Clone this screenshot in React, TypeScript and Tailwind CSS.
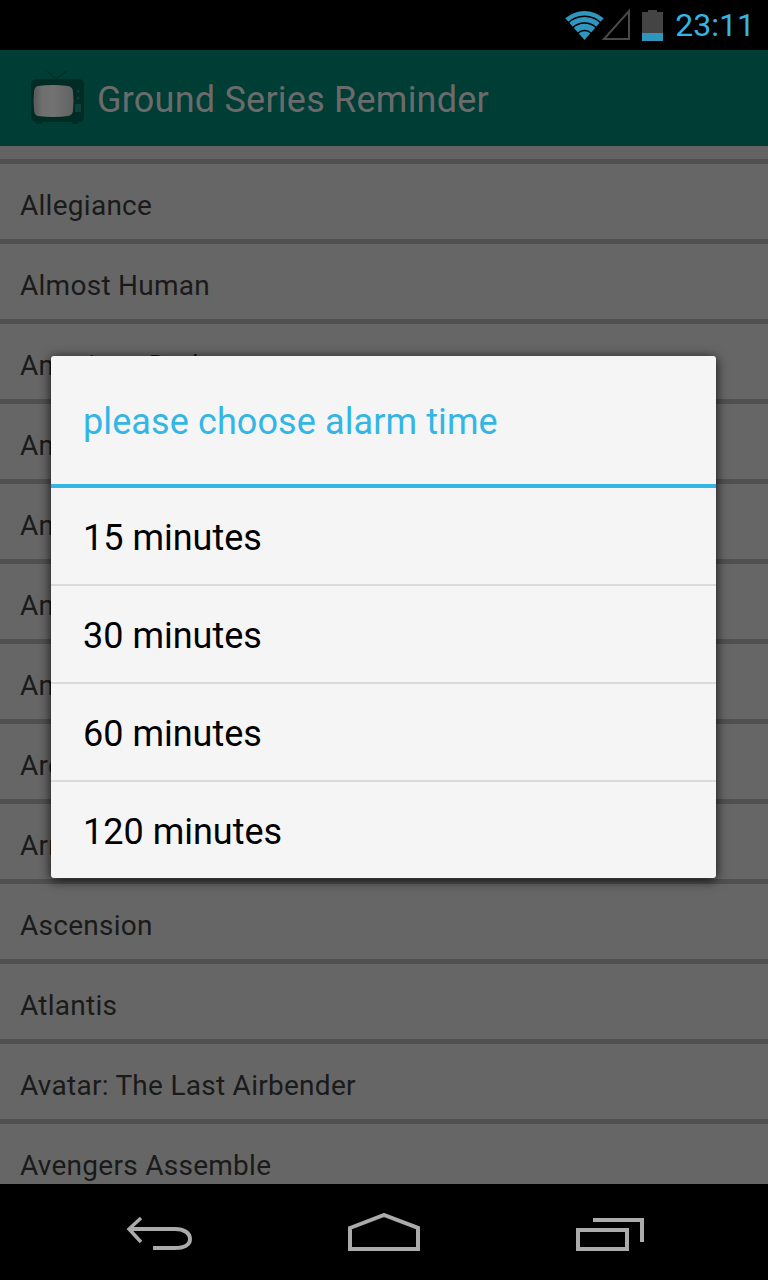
import React from 'react';

const shows = [
  'Allegiance',
  'Almost Human',
  'American Dad',
  'American Horror Story',
  'Ancient Aliens',
  'Andromeda',
  'Angel',
  'Archer',
  'Arrow',
  'Ascension',
  'Atlantis',
  'Avatar: The Last Airbender',
  'Avengers Assemble',
];

const alarmTimes = ['15 minutes', '30 minutes', '60 minutes', '120 minutes'];

function StatusIcons() {
  return (
    <svg width="66" height="34" viewBox="0 0 66 34" className="block">
      {/* wifi: a fan cut by three dark arcs */}
      <g transform="translate(1 3)">
        <path d="M19.5 29 L0.27 7.3 A29 29 0 0 1 38.73 7.3Z" fill="#2f96bd" />
        <g fill="none" stroke="#000000" strokeWidth="1.6">
          <path d="M2.9 12.1 A23.7 23.7 0 0 1 36.1 12.1" />
          <path d="M7.6 16.9 A17 17 0 0 1 31.4 16.9" />
          <path d="M12.85 22.2 A9.5 9.500 0 0 1 26.15 22.2" />
        </g>
      </g>
      {/* signal */}
      <path d="M40 31 L65 3 V31Z" fill="none" stroke="#4a4a4a" strokeWidth="2" />
    </svg>
  );
}

function BatteryIcon() {
  return (
    <div className="flex w-[21px] flex-col items-center">
      <div className="h-[2px] w-[9px] bg-[#444444]" />
      <div className="h-[21px] w-[21px] bg-[#444444]" />
      <div className="h-[8px] w-[21px] bg-[#2f96bd]" />
    </div>
  );
}

function TvIcon() {
  return (
    <svg width="56" height="54" viewBox="0 0 56 54" className="block">
      <defs>
        <linearGradient id="tvScreen" x1="0" x2="1" y1="0" y2="0">
          <stop offset="0" stopColor="#585858" />
          <stop offset="0.22" stopColor="#6f6f6f" />
          <stop offset="0.5" stopColor="#727272" />
          <stop offset="1" stopColor="#626262" />
        </linearGradient>
      </defs>
      <path d="M18 0 L27 8 L38 0" fill="none" stroke="#022f29" strokeWidth="1.500" />
      <rect x="2" y="8" width="53" height="43" rx="5" fill="#012c26" />
      <path d="M9 15 Q24 13 39 15 Q44 16 44 21 Q45 30 44 39 Q44 44 39 45 Q24 47 9 45 Q5 44 5 39 Q4 30 5 21 Q5 16 9 15Z" fill="url(#tvScreen)" />
      <circle cx="49" cy="20" r="1.500" fill="#0b4238" />
      <circle cx="49" cy="27" r="1.500" fill="#0b4238" />
      <rect x="46" y="33" width="6" height="8" fill="#0b4238" />
      <rect x="7" y="51" width="6" height="2" fill="#012c26" />
      <rect x="43" y="51" width="6" height="2" fill="#012c26" />
    </svg>
  );
}

function BackIcon() {
  return (
    <svg width="68" height="38" viewBox="0 0 68 38" fill="none" stroke="#ababab" strokeWidth="4">
      <path d="M15 5 L3 16 L15 29" strokeWidth="3.500" />
      <path d="M3 16 H49 C58 16 64 20 64 26 C64 32 58 35 49 35 H27" />
    </svg>
  );
}

function HomeIcon() {
  return (
    <svg width="72" height="38" viewBox="0 0 72 38" fill="none" stroke="#ababab" strokeWidth="4">
      <path d="M2 15 L36 2 L70 15 V36 H2Z" />
    </svg>
  );
}

function RecentsIcon() {
  return (
    <svg width="68" height="38" viewBox="0 0 68 38" fill="none" stroke="#ababab" strokeWidth="4">
      <path d="M17 7 H66 V29" />
      <rect x="2" y="17" width="49" height="19" />
    </svg>
  );
}

export default function App() {
  return (
    <div className="relative flex h-[1280px] w-[768px] flex-col overflow-hidden bg-black font-['Roboto',sans-serif]">
      {/* status bar */}
      <div className="flex h-[50px] shrink-0 items-center justify-end gap-[12px] pr-[13px]">
        <StatusIcons />
        <BatteryIcon />
        <span className="text-[32px] leading-[50px] text-[#33b5e5]">23:11</span>
      </div>

      {/* action bar */}
      <div className="flex h-[96px] shrink-0 items-center gap-[12px] bg-[#003d35] pl-[29px]">
        <TvIcon />
        <span className="pt-[4px] text-[36px] tracking-[0.23px] text-[#6b6b6b]">Ground Series Reminder</span>
      </div>

      {/* list */}
      <div className="flex h-[1038px] shrink-0 flex-col overflow-hidden bg-[#636363] pt-[13px]">
        {shows.map(show => (
          <div key={show} className="h-[80px] shrink-0 border-t-[5px] border-[#505050] bg-[#666666] pt-[22px] pl-[20px] text-[28px] leading-[40px] tracking-[0.27px] text-[#1a1a1a]">
            {show}
          </div>
        ))}
      </div>

      {/* nav bar */}
      <div className="flex h-[96px] shrink-0 items-center bg-black pl-[126px]">
        <BackIcon />
        <div className="ml-[154px]"><HomeIcon /></div>
        <div className="ml-[156px]"><RecentsIcon /></div>
      </div>

      {/* dialog */}
      <div className="absolute top-[356px] left-[51px] w-[665px] rounded-[3px] bg-[#f5f5f5] shadow-[0_2px_12px_rgba(0,0,0,0.85)]">
        <div className="flex h-[128px] items-center pt-[4px] pl-[32px] text-[36px] tracking-[0.1px] text-[#33b5e5]">please choose alarm time</div>
        <div className="h-[4px] bg-[#33b5e5]" />
        {alarmTimes.map((time, i) => (
          <div key={time} className={`flex items-center pt-[4px] pl-[32px] text-[36px] text-black ${i < 3 ? 'h-[98px] border-b-2 border-[#dadada]' : 'h-[96px]'}`}>
            {time}
          </div>
        ))}
      </div>
    </div>
  );
}
